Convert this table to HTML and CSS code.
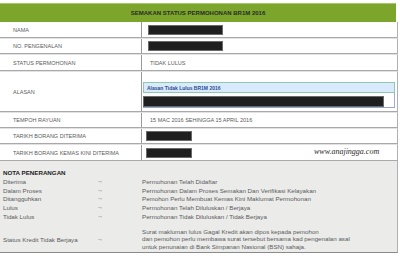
FILE: index.html
```
<!DOCTYPE html>
<html>
<head>
<meta charset="utf-8">
<link rel="stylesheet" href="styles.css">
</head>
<body>
<div class="page">
  <div class="header">SEMAKAN STATUS PERMOHONAN BR1M 2016</div>
  <div class="row h16"><div class="label">NAMA</div><div class="value"><span class="redact r-name"></span></div></div>
  <div class="row h16"><div class="label">NO. PENGENALAN</div><div class="value"><span class="redact r-name"></span></div></div>
  <div class="row h17"><div class="label">STATUS PERMOHONAN</div><div class="value text">TIDAK LULUS</div></div>
  <div class="row h41"><div class="label">ALASAN</div>
    <div class="value top">
      <div class="reason">
        <div class="reason-head">Alasan Tidak Lulus BR1M 2016</div>
        <div class="reason-body"><span class="redact r-wide"></span></div>
      </div>
    </div>
  </div>
  <div class="row h16"><div class="label">TEMPOH RAYUAN</div><div class="value text">15 MAC 2016 SEHINGGA 15 APRIL 2016</div></div>
  <div class="row h16"><div class="label">TARIKH BORANG DITERIMA</div><div class="value"><span class="redact r-date"></span></div></div>
  <div class="row h17 last"><div class="label">TARIKH BORANG KEMAS KINI DITERIMA</div><div class="value"><span class="redact r-date"></span></div>
    <div class="watermark">www.anajingga.com</div>
  </div>
  <div class="notes">
    <div class="notes-title">NOTA PENERANGAN</div>
    <div class="n-label">Diterima</div><div class="n-arrow">→</div><div class="n-text">Permohonan Telah Didaftar</div>
    <div class="n-label">Dalam Proses</div><div class="n-arrow">→</div><div class="n-text">Permohonan Dalam Proses Semakan Dan Verifikasi Kelayakan</div>
    <div class="n-label">Ditangguhkan</div><div class="n-arrow">→</div><div class="n-text">Pemohon Perlu Membuat Kemas Kini Maklumat Permohonan</div>
    <div class="n-label">Lulus</div><div class="n-arrow">→</div><div class="n-text">Permohonan Telah Diluluskan / Berjaya</div>
    <div class="n-label">Tidak Lulus</div><div class="n-arrow">→</div><div class="n-text">Permohonan Tidak Diluluskan / Tidak Berjaya</div>
    <div class="n-label gapped mid">Status Kredit Tidak Berjaya</div><div class="n-arrow gapped mid">→</div>
    <div class="n-text gapped">Surat makluman lulus Gagal Kredit akan dipos kepada pemohon<br>dan pemohon perlu membawa surat tersebut bersama kad pengenalan asal<br>untuk penunaian di Bank Simpanan Nasional (BSN) sahaja.</div>
  </div>
</div>
</body>
</html>
```
FILE: styles.css
```
html, body { margin: 0; padding: 0; background: #fff; }
body { font-family: "Liberation Sans", Arial, sans-serif; color: #555; }
.page { width: 398px; position: relative; }
.header {
  margin-top: 3px;
  height: 19px;
  box-sizing: border-box;
  border-top: 1px solid #a6c86a;
  background: #7ba52b;
  color: #2a2a2a;
  font-weight: bold;
  font-size: 6px;
  display: flex; align-items: center; justify-content: center;
  width: 396px;
}
.row {
  display: grid;
  grid-template-columns: 141px 1fr;
  box-sizing: border-box;
  border-bottom: 1px solid #a9a9a9;
  border-right: 1px solid #b0b0b0;
  position: relative;
}
.row + .row { border-top: 1px solid #e2e2e2; }
.h16 { height: 16px; }
.h17 { height: 17px; }
.h41 { height: 41px; }
.label {
  font-size: 5.5px;
  padding-left: 13px;
  display: flex; align-items: center;
  color: #5a5a5a;
}
.value {
  border-left: 1px solid #9a9a9a;
  display: flex; align-items: center;
  padding-left: 6px;
  font-size: 5.5px;
  color: #5a5a5a;
}
.value.text { padding-left: 8px; }
.value.top { align-items: flex-start; padding: 10px 2px 0 1px; }
.redact {
  display: block;
  background: #1f1f1f;
  border: 1px solid #6a6a6a;
  box-sizing: border-box;
}
.r-name { width: 75px; height: 10px; }
.r-date { width: 46px; height: 10px; margin-left: -2px; }
.r-wide { width: 241px; height: 11px; }
.reason { width: 252px; }
.reason-head {
  background: #d8eafc;
  border: 1px solid #8fc9ad;
  height: 11px;
  box-sizing: border-box;
  font-size: 5px;
  font-weight: bold;
  color: #2b4a92;
  padding-left: 3px;
  display: flex; align-items: center;
}
.reason-body {
  height: 15px;
  box-sizing: border-box;
  border-right: 1px solid #9cb0d4;
  border-bottom: 1px solid #94a6cf;
  padding-top: 3px;
}
.watermark {
  position: absolute;
  left: 314px; top: 2px;
  font-family: "Liberation Serif", serif;
  font-style: italic;
  font-size: 8px;
  color: #2a2a2a;
}
.notes {
  background: #ebebea;
  border-bottom: 1px solid #8a8a8a;
  border-right: 1px solid #b0b0b0;
  box-sizing: border-box;
  height: 92px;
  padding: 8px 0 0 3px;
  display: grid;
  grid-template-columns: 94px 45px 1fr;
  grid-auto-rows: auto;
  font-size: 6.2px;
  line-height: 7.8px;
  color: #5a5a5a;
}
.notes-title {
  grid-column: 1 / 4;
  font-weight: bold;
  color: #222;
}
.n-arrow { font-size: 6px; }
.gapped { margin-top: 6px; }
.mid { align-self: center; }
```
